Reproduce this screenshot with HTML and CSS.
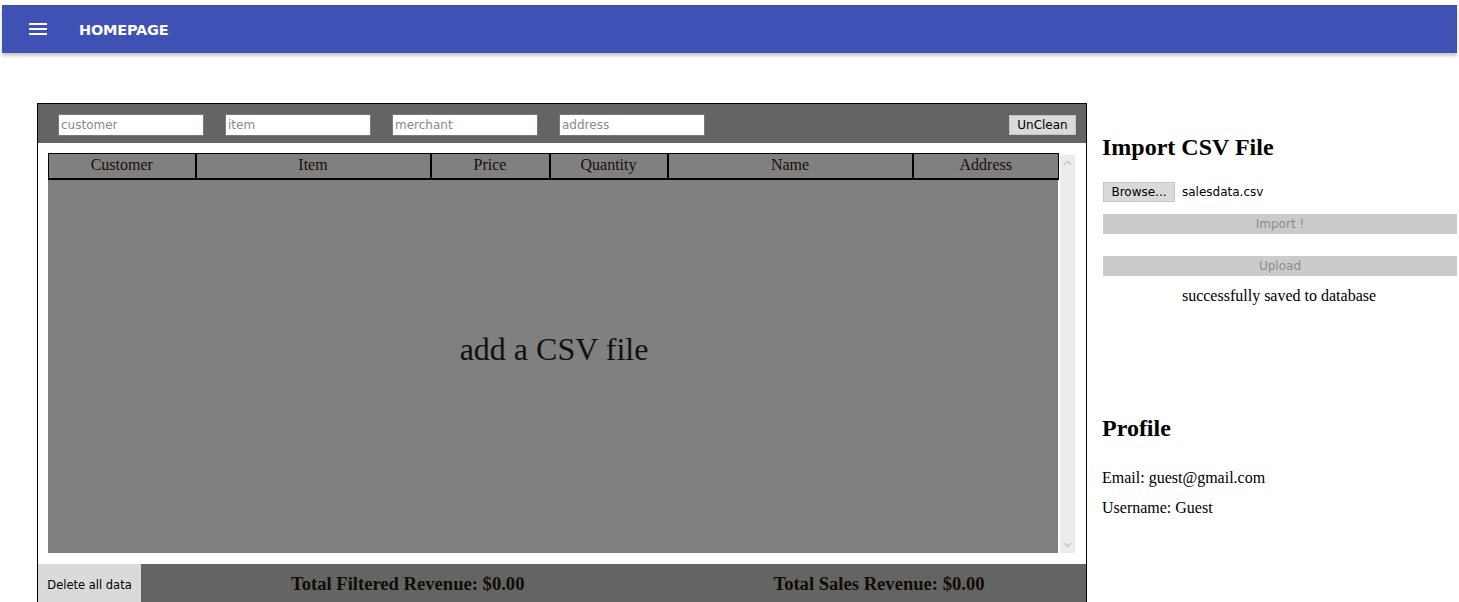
FILE: index.html
```html
<!DOCTYPE html>
<html>
<head>
<meta charset="utf-8">
<title>Homepage</title>
<link rel="stylesheet" href="styles.css">
</head>
<body>
<header class="appbar">
  <button class="menu-btn" aria-label="menu">
    <svg width="18" height="14" viewBox="0 0 18 14"><rect x="0" y="1" width="18" height="2" fill="#fff"/><rect x="0" y="6" width="18" height="2" fill="#fff"/><rect x="0" y="11" width="18" height="2" fill="#fff"/></svg>
  </button>
  <span class="title">HOMEPAGE</span>
</header>
<main class="layout">
  <section class="panel">
    <div class="filters">
      <input class="filter" placeholder="customer">
      <input class="filter" placeholder="item">
      <input class="filter" placeholder="merchant">
      <input class="filter" placeholder="address">
      <button class="btn unclean">UnClean</button>
    </div>
    <div class="table-wrap">
      <div class="table-area">
        <table class="grid">
          <thead>
            <tr>
              <th class="c1">Customer</th>
              <th class="c2">Item</th>
              <th class="c3">Price</th>
              <th class="c4">Quantity</th>
              <th class="c5">Name</th>
              <th class="c6">Address</th>
            </tr>
          </thead>
        </table>
        <div class="empty">add a CSV file</div>
      </div>
      <div class="scrollbar">
        <svg class="arr" width="9" height="6" viewBox="0 0 9 6"><path d="M1 5 L4.5 1.5 L8 5" fill="none" stroke="#c4c4c4" stroke-width="1.3"/></svg>
        <svg class="arr" width="9" height="6" viewBox="0 0 9 6"><path d="M1 1 L4.5 4.5 L8 1" fill="none" stroke="#c4c4c4" stroke-width="1.3"/></svg>
      </div>
    </div>
    <div class="footer">
      <button class="btn delete">Delete all data</button>
      <div class="total t1">Total Filtered Revenue: $0.00</div>
      <div class="total t2">Total Sales Revenue: $0.00</div>
    </div>
  </section>
  <aside class="side">
    <h2 class="h">Import CSV File</h2>
    <div class="file-row">
      <button class="btn browse">Browse...</button>
      <span class="fname">salesdata.csv</span>
    </div>
    <button class="btn wide" disabled>Import !</button>
    <button class="btn wide upload" disabled>Upload</button>
    <p class="status">successfully saved to database</p>
    <h2 class="h profile">Profile</h2>
    <p class="info">Email: guest@gmail.com</p>
    <p class="info">Username: Guest</p>
  </aside>
</main>
</body>
</html>
```
FILE: styles.css
```css
* { box-sizing: border-box; }
html, body { margin: 0; padding: 0; background: #fff; }
body { font-family: "Liberation Serif", "Times New Roman", serif; color: #000; overflow: hidden; height: 602px; }

.appbar {
  margin: 5px 2px 0 2px;
  height: 48px;
  background: #3f51b5;
  display: flex;
  align-items: center;
  box-shadow: 0 3px 3px rgba(0,0,0,0.22);
}
.menu-btn {
  background: none; border: 0; padding: 0;
  margin-left: 27px; width: 18px; height: 14px;
  display: flex;
}
.title {
  margin-left: 32px;
  color: #fff;
  font-family: "DejaVu Sans", Verdana, sans-serif;
  font-weight: bold;
  font-size: 14.5px;
  letter-spacing: -0.2px;
  padding-top: 1px;
}

.layout {
  display: flex;
  align-items: flex-start;
  margin-top: 50px;
  padding-left: 37px;
}

.panel {
  width: 1050px;
  border: 1px solid #000;
  border-bottom: 0;
  flex: none;
  display: flex;
  flex-direction: column;
}
.filters {
  background: #636563;
  height: 39px;
  display: flex;
  align-items: center;
  padding: 0 10px 0 20px;
  gap: 21px;
}
.filter {
  width: 146px;
  height: 22px;
  margin-top: 2px;
  border: 1px solid #7a7a7a;
  background: #fff;
  font-family: "DejaVu Sans", Tahoma, sans-serif;
  font-size: 12px;
  padding: 1px 2px;
  outline: none;
}
.filter::placeholder { color: #8a8a8a; }
.btn {
  font-family: "DejaVu Sans", Tahoma, sans-serif;
  font-size: 12px;
  color: #000;
  background: #dadada;
  border: 1px solid #c4c4c4;
  padding: 0;
  cursor: default;
}
.unclean {
  margin-left: auto;
  width: 67px;
  height: 20px;
  margin-top: 3px;
}

.table-wrap {
  display: flex;
  padding: 10px 10px 11px 10px;
  gap: 2px;
  align-items: stretch;
}
.table-area {
  width: 1010px;
  height: 400px;
  background: #808080;
  display: flex;
  flex-direction: column;
}
.grid {
  width: 1010px;
  border-collapse: collapse;
  table-layout: fixed;
}
.grid th {
  border: 1px solid #000;
  border-width: 1px 2px 2px 1px;
  font-weight: normal;
  font-size: 16px;
  height: 25px;
  padding: 0 0 2px 0;
  text-align: center;
  color: #1a0f08;
}
.grid th:last-child { border-right-width: 1px; }
.c1 { width: 147px; }
.c2 { width: 235px; }
.c3 { width: 119px; }
.c4 { width: 118px; }
.c5 { width: 245px; }
.c6 { width: 146px; }
.empty {
  flex: 1;
  display: flex;
  align-items: center;
  justify-content: center;
  font-size: 32px;
  color: #111;
  padding-bottom: 34px;
  padding-left: 2px;
}
.scrollbar {
  width: 15px;
  margin-top: 2px;
  background: #ececec;
  display: flex;
  flex-direction: column;
  justify-content: space-between;
  align-items: center;
  padding: 5px 0 5px;
}

.footer {
  background: #636563;
  height: 40px;
  display: flex;
  align-items: stretch;
}
.delete {
  width: 103px;
  height: 40px;
  border: 0;
  background: #dadada;
  font-size: 11.5px;
  padding-top: 2px;
}
.total {
  font-weight: bold;
  font-size: 18.6px;
  display: flex;
  align-items: center;
  color: #130a05;
  padding-bottom: 0;
}
.t1 { margin-left: 150px; }
.t2 { margin-left: 249px; }

.side {
  flex: 1;
  padding-left: 15px;
  padding-right: 3px;
  padding-top: 30px;
}
.h {
  font-size: 24px;
  margin: 0 0 21px 0;
  line-height: 28px;
}
.file-row {
  display: flex;
  align-items: center;
  gap: 7px;
  margin-left: 1px;
}
.browse {
  width: 72px;
  height: 20px;
}
.fname {
  font-family: "DejaVu Sans", Tahoma, sans-serif;
  font-size: 12px;
}
.wide {
  display: block;
  width: 100%;
  height: 20px;
  margin: 12px 0 0 1px;
  background: #cbcbcb;
  border: 0;
  color: #8c8c8c;
}
.upload { margin-top: 22px; }
.status {
  text-align: center;
  font-size: 16px;
  margin: 11px 0 0 0;
}
.profile { margin-top: 109px; margin-bottom: 26px; }
.info {
  font-size: 16px;
  margin: 0 0 11px 0;
  line-height: 19px;
}
```
